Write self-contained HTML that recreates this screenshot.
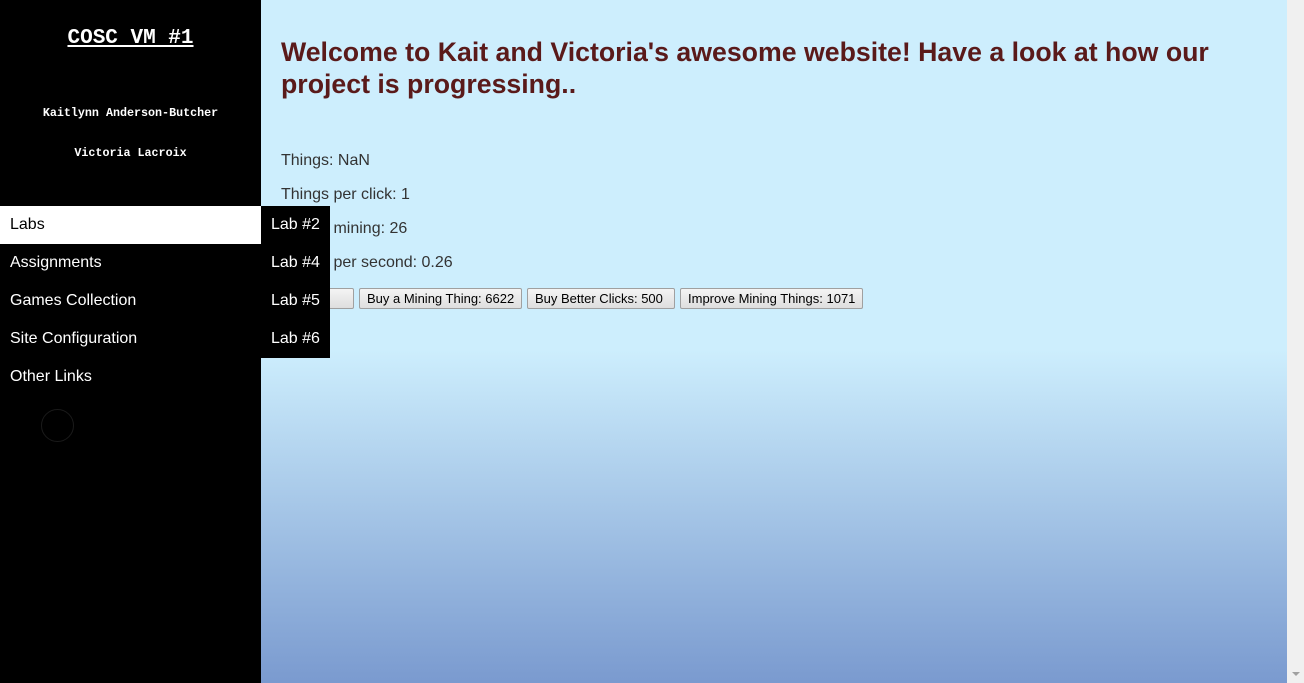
<!DOCTYPE html>
<html><head><style>
*{margin:0;padding:0;box-sizing:border-box}
body{width:1304px;height:683px;overflow:hidden;position:relative;font-family:"Liberation Sans",Arial,sans-serif;background:#000}
#side{position:absolute;left:0;top:0;width:261px;height:683px;background:#000;color:#fff}
#main{position:absolute;left:261px;top:0;width:1026px;height:683px;background:linear-gradient(to bottom,#cdeefd 0px,#cdeefd 350px,#7a9acf 683px)}
#sb{position:absolute;left:1287px;top:0;width:17px;height:683px;background:#f0f0f0}
.mono{font-family:"Liberation Mono","Courier New",monospace;font-weight:bold;position:absolute;width:261px;text-align:center}
.nav{position:absolute;left:0;width:261px;height:38px;line-height:38px;padding-left:10px;font-size:16px;color:#fff}
.sub{position:absolute;left:261px;width:69px;height:38px;line-height:38px;background:#000;color:#fff;font-size:16px;padding-left:10px}
h1{position:absolute;left:20px;top:36px;font-size:26.7px;color:#5a1a1a;line-height:32px;width:990px}
.p{position:absolute;left:20px;font-size:16px;color:#333}
.btn{position:absolute;top:288px;height:21px;border:1px solid #a0a0a0;background:linear-gradient(#f4f4f4,#dedede);font-size:13px;line-height:19px;padding:0 7px;color:#000;border-radius:2px}
</style></head><body>
<div id="side">
<div class="mono" style="top:27px;font-size:21px;text-decoration:underline">COSC VM #1</div>
<div class="mono" style="top:106px;font-size:11.7px">Kaitlynn Anderson-Butcher</div>
<div class="mono" style="top:146px;font-size:11.7px">Victoria Lacroix</div>
<div class="nav" style="top:206px;background:#fff;color:#000">Labs</div>
<div class="nav" style="top:244px">Assignments</div>
<div class="nav" style="top:282px">Games Collection</div>
<div class="nav" style="top:320px">Site Configuration</div>
<div class="nav" style="top:358px">Other Links</div>
<div style="position:absolute;left:41px;top:409px;width:33px;height:33px;border-radius:50%;border:1px solid #1a1a1a"></div>
</div>
<div id="main">
<h1>Welcome to Kait and Victoria's awesome website! Have a look at how our project is progressing..</h1>
<div class="p" style="top:152px">Things: NaN</div>
<div class="p" style="top:186px">Things per click: 1</div>
<div class="p" style="top:220px">Things mining: 26</div>
<div class="p" style="top:254px">Things per second: 0.26</div>
<div class="btn" style="left:20px;width:73px">Get Mining</div>
<div class="btn" style="left:98px">Buy a Mining Thing: 6622</div>
<div class="btn" style="left:266px;width:148px">Buy Better Clicks: 500</div>
<div class="btn" style="left:419px">Improve Mining Things: 1071</div>
</div>
<div class="sub" style="top:206px">Lab #2</div>
<div class="sub" style="top:244px">Lab #4</div>
<div class="sub" style="top:282px">Lab #5</div>
<div class="sub" style="top:320px">Lab #6</div>
<div id="sb"><div style="position:absolute;left:5px;top:672px;border-left:4px solid transparent;border-right:4px solid transparent;border-top:4px solid #a0a0a0"></div></div>
</body></html>
